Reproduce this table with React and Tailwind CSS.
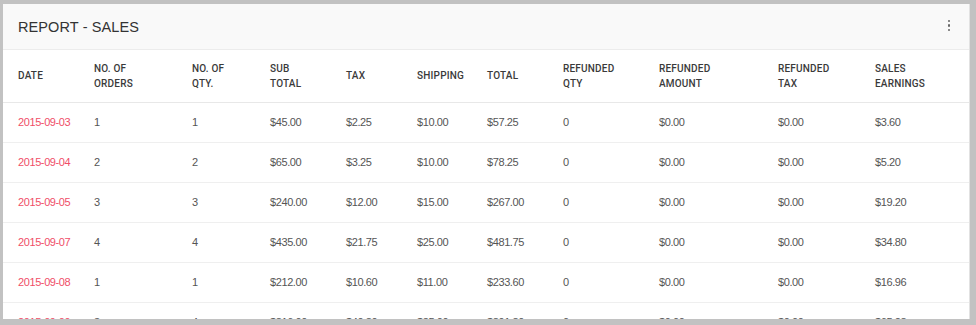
import React from 'react';

const columns = [
  { key: 'date', label: ['DATE'], width: 'w-[91px]' },
  { key: 'orders', label: ['NO. OF', 'ORDERS'], width: 'w-[98px]' },
  { key: 'qty', label: ['NO. OF', 'QTY.'], width: 'w-[78px]' },
  { key: 'sub', label: ['SUB', 'TOTAL'], width: 'w-[76px]' },
  { key: 'tax', label: ['TAX'], width: 'w-[71px]' },
  { key: 'shipping', label: ['SHIPPING'], width: 'w-[70px]' },
  { key: 'total', label: ['TOTAL'], width: 'w-[76px]' },
  { key: 'refQty', label: ['REFUNDED', 'QTY'], width: 'w-[96px]' },
  { key: 'refAmount', label: ['REFUNDED', 'AMOUNT'], width: 'w-[119px]' },
  { key: 'refTax', label: ['REFUNDED', 'TAX'], width: 'w-[97px]' },
  { key: 'earnings', label: ['SALES', 'EARNINGS'], width: 'w-auto' },
];

const rows = [
  ['2015-09-03', '1', '1', '$45.00', '$2.25', '$10.00', '$57.25', '0', '$0.00', '$0.00', '$3.60'],
  ['2015-09-04', '2', '2', '$65.00', '$3.25', '$10.00', '$78.25', '0', '$0.00', '$0.00', '$5.20'],
  ['2015-09-05', '3', '3', '$240.00', '$12.00', '$15.00', '$267.00', '0', '$0.00', '$0.00', '$19.20'],
  ['2015-09-07', '4', '4', '$435.00', '$21.75', '$25.00', '$481.75', '0', '$0.00', '$0.00', '$34.80'],
  ['2015-09-08', '1', '1', '$212.00', '$10.60', '$11.00', '$233.60', '0', '$0.00', '$0.00', '$16.96'],
  ['2015-09-09', '3', '4', '$816.00', '$40.80', '$35.00', '$891.80', '0', '$0.00', '$0.00', '$65.28'],
];

const App = () => {
  return (
    <div className="w-[976px] h-[325px] bg-[#c2c2c2] pt-[4px] pl-[3px] pr-[6px] pb-[6px] font-['Liberation_Sans',Arial,sans-serif]">
      <div className="h-full bg-white border-r border-[#e2e2e2] overflow-hidden flex flex-col">
        {/* Header */}
        <div className="h-[46px] shrink-0 bg-[#f9f9f9] border-b border-[#ececec] flex items-center justify-between pl-[15px] pr-[15px]">
          <h1 className="text-[14.5px] text-[#333] tracking-[0.1px] pt-[2px]">REPORT - SALES</h1>
          <button className="flex flex-col items-center gap-[2px] p-1 -mt-[2px]">
            <span className="w-[2.5px] h-[2.5px] rounded-full bg-[#666]"></span>
            <span className="w-[2.5px] h-[2.5px] rounded-full bg-[#666]"></span>
            <span className="w-[2.5px] h-[2.5px] rounded-full bg-[#666]"></span>
          </button>
        </div>

        {/* Table */}
        <table className="w-full table-fixed border-collapse">
          <colgroup>
            {columns.map((col) => (
              <col key={col.key} className={col.width} />
            ))}
          </colgroup>
          <thead>
            <tr className="h-[52px] border-b border-[#e8e8e8]">
              {columns.map((col, i) => (
                <th
                  key={col.key}
                  className={`text-left align-middle font-['Roboto',Arial,sans-serif] font-medium text-[10px] leading-[15px] text-[#3a3a3a] tracking-[0.2px] ${
                    i === 0 ? 'pl-[15px]' : 'pl-0'
                  }`}
                >
                  {col.label.map((line) => (
                    <div key={line}>{line}</div>
                  ))}
                </th>
              ))}
            </tr>
          </thead>
          <tbody>
            {rows.map((row) => (
              <tr key={row[0]} className="h-[40px] border-b border-[#efefef]">
                {row.map((cell, i) => (
                  <td
                    key={i}
                    className={`align-middle text-[11px] tracking-[-0.4px] ${
                      i === 0 ? 'pl-[15px] text-[#f04e67]' : 'text-[#555]'
                    }`}
                  >
                    {cell}
                  </td>
                ))}
              </tr>
            ))}
          </tbody>
        </table>
      </div>
    </div>
  );
};

export default App;
